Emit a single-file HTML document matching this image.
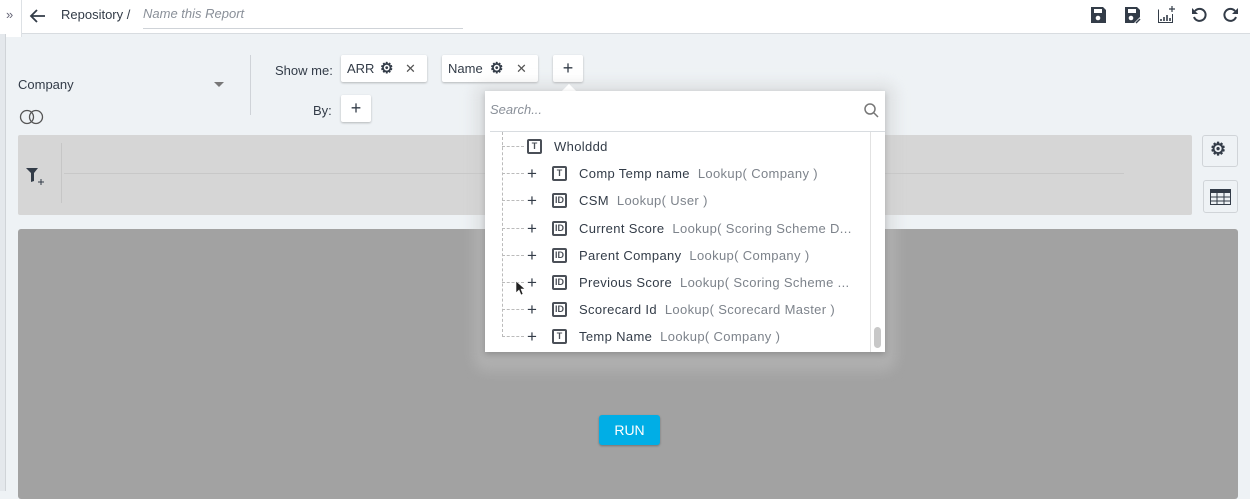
<!DOCTYPE html>
<html><head><meta charset="utf-8"><style>
*{box-sizing:border-box;margin:0;padding:0}
body{width:1250px;height:491px;overflow:hidden;background:#eef2f5;font-family:"Liberation Sans",sans-serif;color:#333c48;position:relative;font-size:13px}
.abs{position:absolute}
.chip{position:absolute;background:#fff;box-shadow:0 1px 2px rgba(0,0,0,.25);border-radius:2px;height:27px;font-size:13px;line-height:27px}
.row{position:absolute;left:0;height:27px;font-size:13px;line-height:27px;white-space:nowrap;letter-spacing:0.35px}
.ic{position:absolute;width:15px;height:15px;border:2px solid #4a4f57;border-radius:2px;font-size:9px;font-weight:bold;line-height:11px;text-align:center;color:#4a4f57;letter-spacing:0}
.gray{color:#7d838b}
.gear{position:absolute;font-size:15px;font-weight:bold;color:#333c48}
</style></head><body>
<div class="abs" style="left:0;top:0;width:1250px;height:34px;background:#fff;border-bottom:1px solid #d8dce0"></div>
<div class="abs" style="left:0;top:0;width:22px;height:37px;background:#fff;border-right:1px solid #dde1e5"></div>
<div class="abs" style="left:0;top:34px;width:6px;height:457px;background:#e4e8ec;border-right:1px solid #d0d4d8"></div>
<div class="abs" style="left:6px;top:7px;font-size:13px;color:#667">»</div>
<svg class="abs" style="left:29px;top:8px" width="18" height="16"><path d="M16 8H2M8 2L2 8l6 6" stroke="#333c48" stroke-width="1.8" fill="none"/></svg>
<div class="abs" style="left:61px;top:7px;font-size:13px">Repository /</div>
<div class="abs" style="left:143px;top:6px;font-size:13px;font-style:italic;color:#8a9099">Name this Report</div>
<div class="abs" style="left:143px;top:28px;width:320px;height:1px;background:#cfd3d8"></div>
<svg class="abs" style="left:1089px;top:6px" width="18" height="18"><path d="M2 1h12l3 3v13H2z" fill="#333c48"/><rect x="5" y="3" width="8" height="4" fill="#fff"/><circle cx="9" cy="12" r="2.3" fill="#fff"/></svg>
<svg class="abs" style="left:1123px;top:6px" width="18" height="18"><path d="M2 1h12l3 3v7l-6 6H2z" fill="#333c48"/><rect x="5" y="3" width="8" height="4" fill="#fff"/><circle cx="8" cy="12" r="2.3" fill="#fff"/><path d="M13 17l4-4" stroke="#333c48" stroke-width="1.5"/></svg>
<svg class="abs" style="left:1157px;top:5px" width="19" height="19"><path d="M1.5 4.5v13h14V9" stroke="#333c48" fill="none"/><path d="M15 1v6M12 4h6" stroke="#333c48" stroke-width="1.2"/><path d="M4 16v-2M7 16v-4M10 16v-6M13 16v-3" stroke="#333c48" stroke-width="1.6"/></svg>
<svg class="abs" style="left:1191px;top:6px" width="18" height="18"><path d="M4 5a6 6 0 1 1-1 6" stroke="#333c48" stroke-width="2" fill="none"/><path d="M1 2v6h6z" fill="#333c48"/></svg>
<svg class="abs" style="left:1221px;top:6px" width="18" height="18"><path d="M14 5a6 6 0 1 0 1 6" stroke="#333c48" stroke-width="2" fill="none"/><path d="M17 2v6h-6z" fill="#333c48"/></svg>
<div class="abs" style="left:18px;top:77px;font-size:13px">Company</div>
<div class="abs" style="left:214px;top:82px;width:0;height:0;border-left:5px solid transparent;border-right:5px solid transparent;border-top:5px solid #777"></div>
<svg class="abs" style="left:18px;top:109px" width="28" height="16"><circle cx="9" cy="8" r="6.5" stroke="#555" fill="none" stroke-width="1.3"/><circle cx="18" cy="8" r="6.5" stroke="#555" fill="none" stroke-width="1.3"/></svg>
<div class="abs" style="left:250px;top:55px;width:1px;height:60px;background:#cfd3d8"></div>
<div class="abs" style="left:275px;top:63px">Show me:</div>
<div class="chip" style="left:341px;top:55px;width:86px;padding-left:6px">ARR <span class="gear" style="left:39px">⚙</span><span style="position:absolute;left:64px;color:#555">✕</span></div>
<div class="chip" style="left:442px;top:55px;width:96px;padding-left:6px">Name <span class="gear" style="left:48px">⚙</span><span style="position:absolute;left:74px;color:#555">✕</span></div>
<div class="chip" style="left:553px;top:55px;width:30px;text-align:center;font-size:18px">+</div>
<div class="abs" style="left:313px;top:103px">By:</div>
<div class="chip" style="left:341px;top:95px;width:30px;text-align:center;font-size:18px">+</div>
<div class="abs" style="left:18px;top:135px;width:1174px;height:80px;background:#d6d6d6;border-radius:2px"></div>
<div class="abs" style="left:61px;top:143px;width:1px;height:60px;background:#c6c6c6"></div>
<div class="abs" style="left:64px;top:173px;width:1060px;height:1px;background:#c8c8c8"></div>
<svg class="abs" style="left:26px;top:167px" width="22" height="20"><path d="M0 1h12l-4 5v8l-3 1V6z" fill="#333c48"/><path d="M15 12v6M12 15h6" stroke="#333c48" stroke-width="1"/></svg>
<div class="abs" style="left:1202px;top:135px;width:36px;height:32px;border:1px solid #d0d4d8;border-radius:3px;background:#eef2f5"></div>
<div class="abs" style="left:1210px;top:139px;font-size:18px;font-weight:bold;color:#333c48">⚙</div>
<div class="abs" style="left:1203px;top:180px;width:35px;height:33px;border:1px solid #d0d4d8;border-radius:3px;background:#eef2f5"></div>
<svg class="abs" style="left:1210px;top:189px" width="21" height="16"><rect x="0.5" y="0.5" width="20" height="15" fill="none" stroke="#333c48"/><rect x="0" y="0" width="21" height="4" fill="#333c48"/><path d="M0 8h21M0 12h21M7 4v12M14 4v12" stroke="#333c48"/></svg>
<div class="abs" style="left:18px;top:229px;width:1220px;height:270px;background:#a2a2a2;border-radius:3px"></div>
<div class="abs" style="left:599px;top:415px;width:61px;height:30px;background:#00aee6;border-radius:3px;color:#fff;font-size:14px;text-align:center;line-height:30px;box-shadow:0 1px 2px rgba(0,0,0,.3)">RUN</div>
<div class="abs" style="left:473px;top:82px;width:424px;height:290px;background:rgba(200,200,200,.35);border-radius:14px;filter:blur(6px)"></div>
<div class="abs" style="left:564px;top:86px;width:10px;height:10px;background:#fff;transform:rotate(45deg)"></div>
<div class="abs" style="left:485px;top:91px;width:400px;height:261px;background:#fff;box-shadow:0 2px 6px rgba(0,0,0,.2)">
  <div class="abs" style="left:5px;top:11px;font-style:italic;color:#8a9099">Search...</div>
  <svg class="abs" style="left:379px;top:12px" width="15" height="15"><circle cx="6" cy="6" r="5" stroke="#777" stroke-width="1.5" fill="none"/><path d="M10 10l4 4" stroke="#777" stroke-width="1.5"/></svg>
  <div class="abs" style="left:5px;top:40px;width:395px;height:1px;background:#d8dce0"></div>
  <div class="abs" style="left:385px;top:41px;width:1px;height:220px;background:#e2e2e2"></div>
  <div class="abs" style="left:389px;top:236px;width:7px;height:21px;background:#c8c8c8;border-radius:4px"></div>
  <div class="abs" style="left:17px;top:41px;width:0;height:205px;border-left:1px dashed #bbb"></div>
  <div style="position:absolute;left:0;top:42px;width:385px">
    <div class="row" style="top:0"><div class="abs" style="left:17px;top:13px;width:22px;border-top:1px dashed #bbb"></div><div class="ic" style="left:42px;top:6px">T</div><span style="position:absolute;left:69px">Wholddd</span></div>
    <div class="row" style="top:27px"><div class="abs" style="left:17px;top:13px;width:22px;border-top:1px dashed #bbb"></div><span style="position:absolute;left:42px;font-size:17px">+</span><div class="ic" style="left:67px;top:6px">T</div><span style="position:absolute;left:94px">Comp Temp name &nbsp;<span class="gray">Lookup( Company )</span></span></div>
    <div class="row" style="top:54px"><div class="abs" style="left:17px;top:13px;width:22px;border-top:1px dashed #bbb"></div><span style="position:absolute;left:42px;font-size:17px">+</span><div class="ic" style="left:67px;top:6px">ID</div><span style="position:absolute;left:94px">CSM &nbsp;<span class="gray">Lookup( User )</span></span></div>
    <div class="row" style="top:82px"><div class="abs" style="left:17px;top:13px;width:22px;border-top:1px dashed #bbb"></div><span style="position:absolute;left:42px;font-size:17px">+</span><div class="ic" style="left:67px;top:6px">ID</div><span style="position:absolute;left:94px">Current Score &nbsp;<span class="gray">Lookup( Scoring Scheme D...</span></span></div>
    <div class="row" style="top:109px"><div class="abs" style="left:17px;top:13px;width:22px;border-top:1px dashed #bbb"></div><span style="position:absolute;left:42px;font-size:17px">+</span><div class="ic" style="left:67px;top:6px">ID</div><span style="position:absolute;left:94px">Parent Company &nbsp;<span class="gray">Lookup( Company )</span></span></div>
    <div class="row" style="top:136px"><div class="abs" style="left:17px;top:13px;width:22px;border-top:1px dashed #bbb"></div><span style="position:absolute;left:42px;font-size:17px">+</span><div class="ic" style="left:67px;top:6px">ID</div><span style="position:absolute;left:94px">Previous Score &nbsp;<span class="gray">Lookup( Scoring Scheme ...</span></span></div>
    <div class="row" style="top:163px"><div class="abs" style="left:17px;top:13px;width:22px;border-top:1px dashed #bbb"></div><span style="position:absolute;left:42px;font-size:17px">+</span><div class="ic" style="left:67px;top:6px">ID</div><span style="position:absolute;left:94px">Scorecard Id &nbsp;<span class="gray">Lookup( Scorecard Master )</span></span></div>
    <div class="row" style="top:190px"><div class="abs" style="left:17px;top:13px;width:22px;border-top:1px dashed #bbb"></div><span style="position:absolute;left:42px;font-size:17px">+</span><div class="ic" style="left:67px;top:6px">T</div><span style="position:absolute;left:94px">Temp Name &nbsp;<span class="gray">Lookup( Company )</span></span></div>
  </div>
  <svg class="abs" style="left:30px;top:189px" width="10" height="16"><path d="M1 1v12l3-3 2 5 2-1-2-5h4z" fill="#222" stroke="#fff" stroke-width=".6"/></svg>
</div>
</body></html>
